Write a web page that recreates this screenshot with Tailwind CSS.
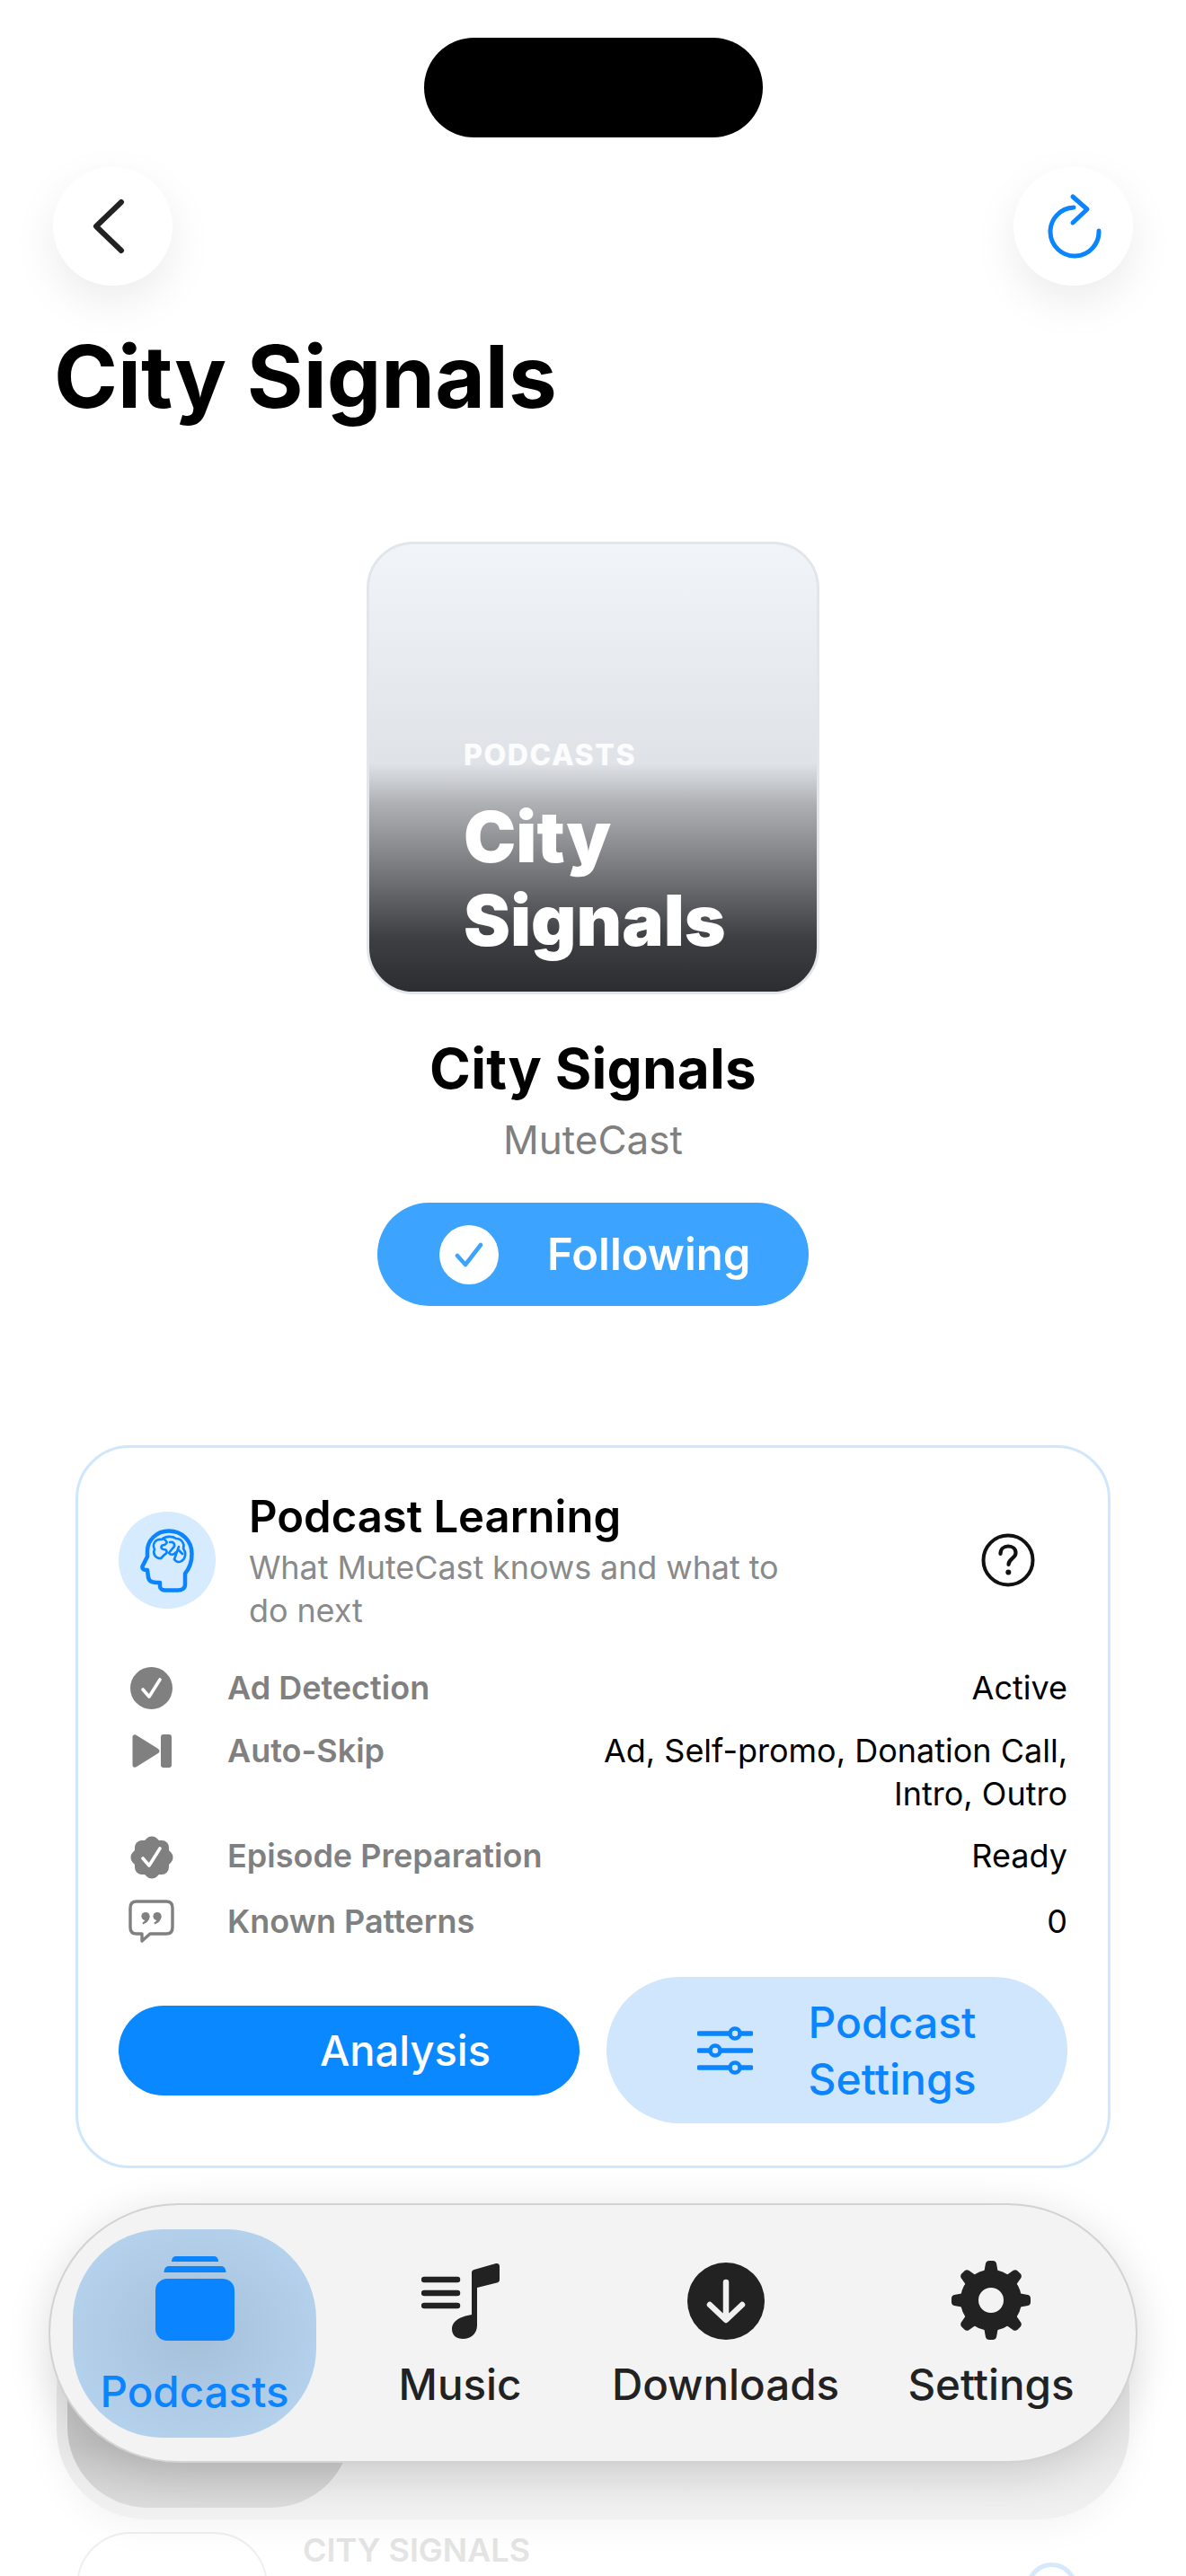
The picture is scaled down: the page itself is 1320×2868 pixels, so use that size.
<!DOCTYPE html>
<html lang="en">
<head>
<meta charset="utf-8">
<title>City Signals</title>
<script src="https://cdn.jsdelivr.net/npm/@tailwindcss/browser@4"></script>
</head>
<body class="bg-white">
<div class="relative w-[1320px] h-[2868px] overflow-hidden bg-white font-[Inter,sans-serif] text-black">

  <!-- island -->
  <div class="flex justify-center pt-[42px]">
    <div class="w-[377px] h-[111px] rounded-full bg-black"></div>
  </div>

  <!-- nav buttons -->
  <div class="flex justify-between px-[59px] mt-[33px]">
    <button class="w-[133px] h-[132px] rounded-full bg-white shadow-[0_18px_50px_rgba(0,0,0,0.08)] flex items-center justify-center">
      <svg width="133" height="132" viewBox="0 0 133 132" fill="none"><path d="M76 40 L48 67 L76 94" transform="translate(0,-1)" stroke="#222" stroke-width="6" stroke-linecap="round" stroke-linejoin="round"/></svg>
    </button>
    <button class="w-[133px] h-[132px] rounded-full bg-white shadow-[0_18px_50px_rgba(0,0,0,0.08)] flex items-center justify-center">
      <svg width="133" height="132" viewBox="0 0 133 132" fill="none"><path d="M67 45 A27 27 0 1 0 95 71" stroke="#0a84ff" stroke-width="5" stroke-linecap="round"/><path d="M66 33 L82 47 L66 62" stroke="#0a84ff" stroke-width="5" stroke-linecap="round" stroke-linejoin="round"/></svg>
    </button>
  </div>

  <h1 class="mt-[53px] pl-[60px] text-[96px] leading-[96px] font-bold">City Signals</h1>

  <!-- artwork + meta -->
  <div class="flex flex-col items-center mt-[136px]">
    <div class="w-[504px] h-[504px] rounded-[52px] border-[3px] border-[#e2e5ea] bg-[linear-gradient(180deg,#f1f5f9_0%,#dfe3e8_49%,#aeb0b4_58%,#76787c_73%,#3e3f42_88%,#2c2d30_100%)] flex flex-col justify-end pl-[105px] pb-[33px] text-white overflow-hidden">
      <div class="text-[32px] leading-[40px] font-extrabold tracking-[1.6px] text-white/90 mb-[24px]">PODCASTS</div>
      <div class="text-[78px] leading-[93px] font-black w-[340px]">City Signals</div>
    </div>
    <div class="mt-[45px] text-[62px] leading-[76px] font-bold tracking-[0.2px]">City Signals</div>
    <div class="mt-[14px] text-[44px] leading-[54px] text-[#808080]">MuteCast</div>
    <button class="mt-[43px] w-[480px] h-[115px] rounded-full bg-[#3ca3ff] flex items-center pl-[69px] text-white">
      <span class="w-[66px] h-[66px] rounded-full bg-white flex items-center justify-center">
        <svg width="40" height="40" viewBox="0 0 40 40" fill="none"><path d="M7 21 L16 31 L33 9" stroke="#3ca3ff" stroke-width="4.5" stroke-linecap="round" stroke-linejoin="round"/></svg>
      </span>
      <span class="ml-[54px] text-[49px] leading-[60px] font-semibold">Following</span>
    </button>
  </div>

  <!-- learning card -->
  <section class="mx-[84px] mt-[155px] rounded-[60px] border-[3px] border-[#cfe6fb] bg-white pt-[49px] pl-[45px] pr-[45px] pb-[47px]">
    <header class="flex items-center">
      <div class="w-[108px] h-[108px] rounded-full bg-[#d6ebfd] flex items-center justify-center mb-[4px] shrink-0">
        <svg width="60" height="71" viewBox="0 0 60 71" fill="none">
          <path d="M50 50 C55 44 57.5 36 57.5 28 C57.5 13 46 2.5 32 2.5 C18 2.5 8 13 8 25 L8 31 L2.5 42 C2 45 4 46 8 46 L9 54 C10 59 13 60 22 60 L22 64 C22 67 25 68.5 28 68.5 L42 68.5 C47 68.5 50 66 50 62 Z" stroke="#0a84ff" stroke-width="4.5" stroke-linejoin="round"/>
          <path d="M23 33 C16 33 14 27 16 23 C13 17 17 11 24 12 C28 8 36 8 40 11 C46 11 50 17 48 22 C52 27 50 34 46 36 C43 38 40 37 38 34" stroke="#0a84ff" stroke-width="2.6" stroke-linecap="round" stroke-linejoin="round"/>
          <path d="M27 12 C30 14 31 16 27 18 C23 18 22 22 26 23 C30 23 31 27 27 29 L23 33 M33 15 C38 14 40 19 36 22 L32 27 C34 30 38 29 40 26 M43 20 L38 34 M43 24 L47 28" stroke="#0a84ff" stroke-width="2.6" stroke-linecap="round" stroke-linejoin="round"/>
        </svg>
      </div>
      <div class="ml-[37px] w-[610px]">
        <h2 class="text-[49px] leading-[56px] font-semibold">Podcast Learning</h2>
        <p class="mt-[4px] text-[36px] leading-[48px] text-[#8a8a8a] tracking-[-0.1px]">What MuteCast knows and what to do next</p>
      </div>
      <svg class="ml-auto mr-[36px] mb-[4px]" width="60" height="60" viewBox="0 0 60 60" fill="none">
        <circle cx="30" cy="30" r="27.5" stroke="#111" stroke-width="4"/>
        <path d="M21.5 23 C21.5 17.5 25.5 14.5 30 14.5 C35 14.5 38.5 17.5 38.5 22 C38.5 28 30.5 28.5 30.5 35" stroke="#111" stroke-width="4.2" stroke-linecap="round"/>
        <circle cx="30.3" cy="43.5" r="3" fill="#111"/>
      </svg>
    </header>

    <dl class="mt-[38px] flex flex-col gap-[21px] text-[36px] leading-[48px]">
      <div class="flex items-start">
        <div class="w-[73px] h-[49px] flex items-center justify-center">
          <svg width="47" height="47" viewBox="0 0 47 47" fill="none"><circle cx="23.5" cy="23.5" r="23.5" fill="#808080"/><path d="M14 25 L21 33 L33 14" stroke="#fff" stroke-width="3.6" stroke-linecap="round" stroke-linejoin="round"/></svg>
        </div>
        <dt class="ml-[48px] font-semibold text-[#808080]">Ad Detection</dt>
        <dd class="ml-auto text-right">Active</dd>
      </div>
      <div class="flex items-start">
        <div class="w-[73px] h-[48px] flex items-center justify-center">
          <svg width="44" height="37" viewBox="0 0 44 37" fill="none"><path d="M0.5 3 C0.5 0.5 3 -0.5 5 1 L29 16 C31 17.5 31 19.5 29 21 L5 36 C3 37.5 0.5 36.5 0.5 34 Z" fill="#808080"/><rect x="32" y="0" width="12" height="37" rx="3" fill="#808080"/></svg>
        </div>
        <dt class="ml-[48px] font-semibold text-[#808080]">Auto-Skip</dt>
        <dd class="ml-auto w-[530px] text-right">Ad, Self-promo, Donation Call, Intro, Outro</dd>
      </div>
      <div class="flex items-start">
        <div class="w-[73px] h-[52px] flex items-center justify-center">
          <svg width="52" height="52" viewBox="0 0 52 52" fill="none">
            <rect x="7" y="7" width="38" height="38" rx="8" fill="#808080"/>
            <rect x="7" y="7" width="38" height="38" rx="8" fill="#808080" transform="rotate(45 26 26)"/>
            <path d="M16 27 L23 35 L35 16" stroke="#fff" stroke-width="3.6" stroke-linecap="round" stroke-linejoin="round"/>
          </svg>
        </div>
        <dt class="ml-[48px] font-semibold text-[#808080]">Episode Preparation</dt>
        <dd class="ml-auto text-right">Ready</dd>
      </div>
      <div class="flex items-start">
        <div class="w-[73px] h-[48px] flex items-center justify-center">
          <svg width="51" height="48" viewBox="0 0 51 48" fill="none">
            <path d="M9 2 H42 C46.5 2 49 4.5 49 9 V31 C49 35.5 46.5 38 42 38 H24 L15 46 V38 H9 C4.5 38 2 35.5 2 31 V9 C2 4.5 4.5 2 9 2 Z" stroke="#808080" stroke-width="3.4" stroke-linejoin="round"/>
            <circle cx="19" cy="18.5" r="4.6" fill="#808080"/><path d="M23.5 18 C23.5 23 20.5 26 16 27.5 L15.5 25.5 C18 24.5 19 22 19 20 Z" fill="#808080"/>
            <circle cx="32" cy="18.5" r="4.6" fill="#808080"/><path d="M36.5 18 C36.5 23 33.5 26 29 27.5 L28.5 25.5 C31 24.5 32 22 32 20 Z" fill="#808080"/>
          </svg>
        </div>
        <dt class="ml-[48px] font-semibold text-[#808080]">Known Patterns</dt>
        <dd class="ml-auto text-right">0</dd>
      </div>
    </dl>

    <div class="mt-[38px] grid grid-cols-2 gap-[30px] items-center">
      <button class="h-[100px] rounded-full bg-[#0a88ff] text-white text-[47px] leading-[60px] font-medium text-left pl-[224px]">Analysis</button>
      <button class="h-[163px] rounded-full bg-[#cfe6fd] text-[#0a84ff] flex items-center pl-[101px]">
        <svg class="shrink-0" width="62" height="54" viewBox="0 0 62 54" fill="none">
          <g stroke="#0a84ff" stroke-width="5.5" stroke-linecap="round"><path d="M2 8 H60 M2 27 H60 M2 46 H60"/></g>
          <g fill="#cfe6fd" stroke="#0a84ff" stroke-width="4.5"><circle cx="42" cy="8" r="5.5"/><circle cx="20" cy="27" r="5.5"/><circle cx="42" cy="46" r="5.5"/></g>
        </svg>
        <span class="ml-[61px] text-[48px] leading-[63px] font-medium text-center w-[188px]">Podcast Settings</span>
      </button>
    </div>
  </section>

  <!-- content scrolled beneath the tab bar -->
  <div class="absolute left-[85px] top-[2819px] w-[213px] h-[80px] rounded-t-[60px] border-t-[2px] border-x-[2px] border-[#efefef]"></div>
  <div class="absolute left-[337px] top-[2817px] text-[36px] leading-[44px] font-semibold text-[#e4e4e4] whitespace-nowrap">CITY SIGNALS</div>
  <div class="absolute left-[1142px] top-[2853px] w-[57px] h-[57px] rounded-full border-[5px] border-[#d6e8fb]"></div>

  <!-- second bar beneath -->
  <div class="absolute left-[63px] top-[2560px] w-[1194px] h-[245px] rounded-[100px] bg-[linear-gradient(180deg,#e9e9e9_70%,#f1f1f1_100%)] shadow-[0_8px_40px_rgba(0,0,0,0.05)]">
    <div class="absolute left-[12px] top-0 w-[316px] h-[232px] rounded-[90px] bg-[linear-gradient(180deg,#c6c6c6_70%,#dcdcdc_100%)]"></div>
  </div>

  <!-- tab bar -->
  <nav class="absolute left-[54px] top-[2453px] w-[1212px] h-[289px] rounded-full bg-[#f3f3f3] border-[2px] border-[#d2d2d2] shadow-[0_10px_50px_rgba(0,0,0,0.14)] flex pl-[25px] pt-[27px] gap-[24.5px]">
    <a class="w-[271px] h-[232px] rounded-[100px] bg-radial from-[#a5bfd9] to-[#b9d7f3] flex flex-col items-center pt-[30px] text-[#0a84ff]">
      <svg width="88" height="94" viewBox="0 0 88 94" fill="none">
        <path d="M18 6 C18 2 20 0 23 0 H65 C68 0 70 2 70 6 Z" fill="#0a84ff"/>
        <path d="M9.500 18 C9.500 13.500 12 11 15 11 H73 C76 11 78.500 13.500 78.500 18 Z" fill="#0a84ff"/>
        <rect x="0" y="25" width="88" height="69" rx="13" fill="#0a84ff"/>
      </svg>
      <span class="mt-[29px] text-[47.5px] leading-[56px] font-medium whitespace-nowrap">Podcasts</span>
    </a>
    <a class="w-[271px] h-[232px] flex flex-col items-center pt-[37px] text-[#222]">
      <svg class="h-[86px]" width="87" height="86" viewBox="0 0 87 86" fill="none">
        <path d="M3 19 H40 M3 34 H40 M3 48 H40" stroke="#222" stroke-width="6.5" stroke-linecap="round"/>
        <path d="M56 11 C56 9.500 57 8.500 58.500 8 L83 1 C85 0.500 87 1.500 87 4 V19 C87 21 86 22 84 22.500 L62 28 V70 C62 79 55 85 46 85 C39 85 34 81 34 74 C34 66 41 62 49 59.500 L56 58 Z" fill="#222"/>
      </svg>
      <span class="mt-[22px] text-[47.5px] leading-[56px] font-medium whitespace-nowrap">Music</span>
    </a>
    <a class="w-[271px] h-[232px] flex flex-col items-center pt-[37px] text-[#222]">
      <svg width="86" height="86" viewBox="0 0 86 86" fill="none">
        <circle cx="43" cy="43" r="43" fill="#222"/>
        <path d="M43 22 V63 M25 47 L43 64 L61 47" stroke="#f0f0f0" stroke-width="6.500" stroke-linecap="round" stroke-linejoin="round"/>
      </svg>
      <span class="mt-[22px] text-[47.5px] leading-[56px] font-medium whitespace-nowrap">Downloads</span>
    </a>
    <a class="w-[271px] h-[232px] flex flex-col items-center pt-[35px] text-[#222]">
      <svg width="88" height="88" viewBox="0 0 88 88" fill="none">
        <circle cx="44" cy="44" r="24" stroke="#222" stroke-width="20"/>
        <g fill="#222">
          <path d="M36 14 L38 3 C38.500 1 40 0 42 0 H46 C48 0 49.500 1 50 3 L52 14 Z"/>
          <path d="M36 14 L38 3 C38.500 1 40 0 42 0 H46 C48 0 49.500 1 50 3 L52 14 Z" transform="rotate(45 44 44)"/>
          <path d="M36 14 L38 3 C38.500 1 40 0 42 0 H46 C48 0 49.500 1 50 3 L52 14 Z" transform="rotate(90 44 44)"/>
          <path d="M36 14 L38 3 C38.500 1 40 0 42 0 H46 C48 0 49.500 1 50 3 L52 14 Z" transform="rotate(135 44 44)"/>
          <path d="M36 14 L38 3 C38.500 1 40 0 42 0 H46 C48 0 49.500 1 50 3 L52 14 Z" transform="rotate(180 44 44)"/>
          <path d="M36 14 L38 3 C38.500 1 40 0 42 0 H46 C48 0 49.500 1 50 3 L52 14 Z" transform="rotate(225 44 44)"/>
          <path d="M36 14 L38 3 C38.500 1 40 0 42 0 H46 C48 0 49.500 1 50 3 L52 14 Z" transform="rotate(270 44 44)"/>
          <path d="M36 14 L38 3 C38.500 1 40 0 42 0 H46 C48 0 49.500 1 50 3 L52 14 Z" transform="rotate(315 44 44)"/>
        </g>
      </svg>
      <span class="mt-[22px] text-[47.5px] leading-[56px] font-medium whitespace-nowrap">Settings</span>
    </a>
  </nav>
</div>
</body>
</html>
